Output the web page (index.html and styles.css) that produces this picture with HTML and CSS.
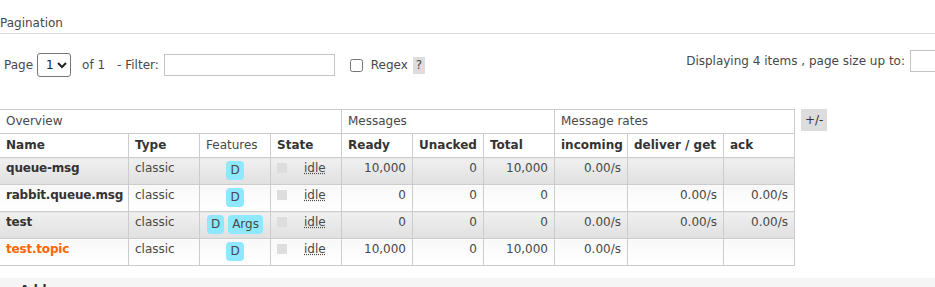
FILE: index.html
```html
<!DOCTYPE html>
<html>
<head>
<meta charset="utf-8">
<link rel="stylesheet" href="styles.css">
</head>
<body>
<div class="section">
  <h2 class="section-title">Pagination</h2>
  <div class="pagination">
    <div class="pager-left">
      <span class="lbl-page">Page</span>
      <select class="page-select"><option>1</option></select>
      <span class="lbl-of">of 1</span>
      <span class="lbl-filter">- Filter:</span>
      <input class="filter-input" type="text">
      <input class="regex-check" type="checkbox">
      <span class="lbl-regex">Regex</span>
      <span class="help">?</span>
    </div>
    <div class="pager-right">
      <span>Displaying 4 items , page size up to:</span>
      <input class="size-input" type="text">
    </div>
  </div>

  <div class="table-wrap">
    <table class="list">
      <colgroup>
        <col class="c-name"><col class="c-std"><col class="c-std"><col class="c-std">
        <col class="c-std"><col class="c-std"><col class="c-std">
        <col class="c-inc"><col class="c-del"><col class="c-std">
      </colgroup>
      <thead>
        <tr class="group">
          <th colspan="4">Overview</th>
          <th colspan="3">Messages</th>
          <th colspan="3">Message rates</th>
        </tr>
        <tr>
          <th class="sort">Name</th>
          <th class="sort">Type</th>
          <th>Features</th>
          <th class="sort">State</th>
          <th class="sort">Ready</th>
          <th class="sort">Unacked</th>
          <th class="sort">Total</th>
          <th class="sort">incoming</th>
          <th class="sort">deliver / get</th>
          <th class="sort">ack</th>
        </tr>
      </thead>
      <tbody>
        <tr class="alt1">
          <td><a class="qname">queue-msg</a></td>
          <td>classic</td>
          <td class="c"><abbr class="badge">D</abbr></td>
          <td><span class="status"></span><abbr title="idle">idle</abbr></td>
          <td class="r">10,000</td>
          <td class="r">0</td>
          <td class="r">10,000</td>
          <td class="r">0.00/s</td>
          <td class="r"></td>
          <td class="r"></td>
        </tr>
        <tr class="alt2">
          <td><a class="qname">rabbit.queue.msg</a></td>
          <td>classic</td>
          <td class="c"><abbr class="badge">D</abbr></td>
          <td><span class="status"></span><abbr title="idle">idle</abbr></td>
          <td class="r">0</td>
          <td class="r">0</td>
          <td class="r">0</td>
          <td class="r"></td>
          <td class="r">0.00/s</td>
          <td class="r">0.00/s</td>
        </tr>
        <tr class="alt1">
          <td><a class="qname">test</a></td>
          <td>classic</td>
          <td class="c"><abbr class="badge">D</abbr> <abbr class="badge">Args</abbr></td>
          <td><span class="status"></span><abbr title="idle">idle</abbr></td>
          <td class="r">0</td>
          <td class="r">0</td>
          <td class="r">0</td>
          <td class="r">0.00/s</td>
          <td class="r">0.00/s</td>
          <td class="r">0.00/s</td>
        </tr>
        <tr class="alt2">
          <td><a class="qname hover">test.topic</a></td>
          <td>classic</td>
          <td class="c"><abbr class="badge">D</abbr></td>
          <td><span class="status"></span><abbr title="idle">idle</abbr></td>
          <td class="r">10,000</td>
          <td class="r">0</td>
          <td class="r">10,000</td>
          <td class="r">0.00/s</td>
          <td class="r"></td>
          <td class="r"></td>
        </tr>
      </tbody>
    </table>
    <span class="options-link">+/-</span>
  </div>
</div>
<div class="section-hidden">
  <h2 class="hidden-title">Add a new queue</h2>
</div>
</body>
</html>
```
FILE: styles.css
```css
html, body {
  margin: 0;
  padding: 0;
  overflow: hidden;
}
body {
  font: 12px "DejaVu Sans", Verdana, sans-serif;
  color: #484848;
  background: #fff;
}
.section {
  overflow: hidden;
}
.section-title {
  margin: 0;
  padding: 16px 0 3px 0;
  font-size: 12px;
  line-height: 14px;
  font-weight: normal;
  border-bottom: 1px solid #ddd;
}
.pagination {
  display: flex;
  align-items: flex-start;
  padding-top: 19px;
  height: 24px;
  margin-bottom: 32px;
}
.pager-left {
  display: flex;
  align-items: center;
  height: 24px;
}
.lbl-page {
  margin-left: 4px;
}
.page-select {
  margin: 0 0 0 4px;
  width: 34px;
  height: 24px;
  font: 12px "DejaVu Sans", Verdana, sans-serif;
  color: #222;
  border: 1px solid #767676;
  border-radius: 3px;
  background: #fff;
  padding: 0 0 0 4px;
}
.lbl-of {
  margin-left: 11px;
}
.lbl-filter {
  margin-left: 12px;
}
.filter-input {
  margin: 0 0 0 5px;
  width: 171px;
  height: 22px;
  box-sizing: border-box;
  border: 1px solid #c4c4c4;
  padding: 0 2px;
  font: 12px "DejaVu Sans", Verdana, sans-serif;
}
.regex-check {
  margin: 0 0 0 15px;
  width: 13px;
  height: 13px;
}
.lbl-regex {
  margin-left: 8px;
}
.help {
  margin-left: 5px;
  background: #ddd;
  padding: 1px 3px;
  line-height: 15px;
  margin-top: 1px;
}
.pager-right {
  margin-left: auto;
  margin-right: -20px;
  margin-top: -3px;
  display: flex;
  align-items: center;
  height: 22px;
}
.size-input {
  margin: 0 0 0 5px;
  width: 45px;
  height: 22px;
  box-sizing: border-box;
  border: 1px solid #c4c4c4;
  padding: 0 2px;
}
.table-wrap {
  display: flex;
  align-items: flex-start;
  margin-left: -1px;
}
table.list {
  border-collapse: collapse;
  table-layout: fixed;
  width: 795px;
  flex: none;
}
col.c-name { width: 129px; }
col.c-std { width: 71px; }
col.c-inc { width: 73px; }
col.c-del { width: 96px; }
table.list th,
table.list td {
  border: 1px solid #ccc;
  padding: 4px 6px;
  line-height: 15px;
  text-align: left;
  vertical-align: top;
  white-space: nowrap;
}
table.list th {
  font-weight: normal;
  background: #fff;
}
table.list th.sort {
  font-weight: bold;
  color: #333;
}
table.list td {
  padding: 3px 6px 8px;
}
table.list td.r {
  text-align: right;
}
table.list td.c {
  text-align: center;
}
tr.alt1 td {
  background: linear-gradient(#f0f0f0, #e0e0e0);
}
tr.alt2 td {
  background: linear-gradient(#f8f8f8, #ffffff);
}
.qname {
  font-weight: bold;
  color: #333;
  text-decoration: none;
  letter-spacing: -0.2px;
}
.qname.hover {
  color: #f60;
}
.badge {
  display: inline-block;
  vertical-align: top;
  background: #8ee8ff;
  color: #484848;
  border-radius: 4px;
  padding: 0 4px;
  line-height: 19px;
  margin-bottom: -4px;
  text-decoration: none;
}
.status {
  display: inline-block;
  width: 10px;
  height: 10px;
  background: #ddd;
  margin-right: 17px;
  vertical-align: -1px;
}
abbr[title] {
  text-decoration: underline dotted;
}
.options-link {
  margin-left: 6px;
  background: #ddd;
  color: #333;
  padding: 4px 4px;
  line-height: 14px;
}
.section-hidden {
  margin-top: 12px;
  background: #f5f5f5;
}
.hidden-title {
  margin: 0;
  padding: 5px 0 5px 20px;
  font-size: 12px;
  line-height: 14px;
  color: #333;
}
```
